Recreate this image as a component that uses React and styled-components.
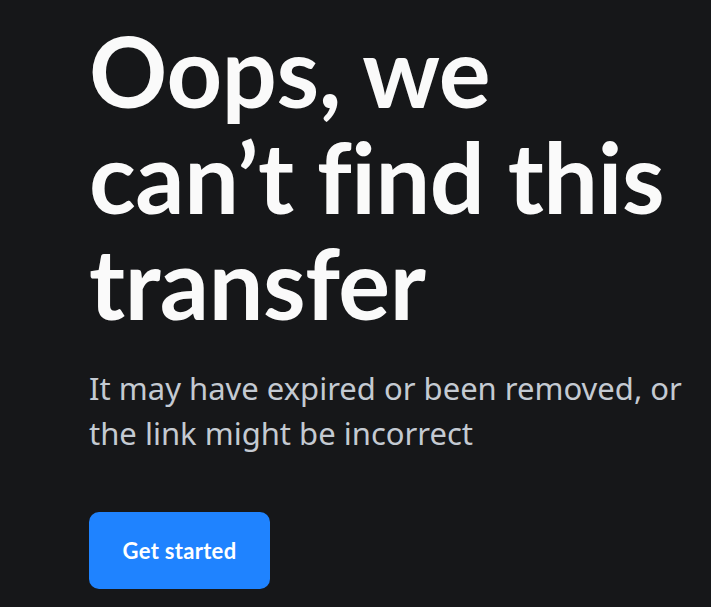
import React from 'react';
import styled, { createGlobalStyle } from 'styled-components';

const Global = createGlobalStyle`
  html, body {
    margin: 0;
    background: #161719;
  }
  body {
    font-family: Lato, "Noto Sans", sans-serif;
  }
`;

const NotFound = () => {
    return (
        <Page>
            <Global />
            <Content>
                <Title>
                    Oops, we<br />
                    can’t find this<br />
                    transfer
                </Title>
                <Lead>
                    It may have expired or been removed, or<br />
                    the link might be incorrect
                </Lead>
                <Button type="button">Get started</Button>
            </Content>
        </Page>
    );
};

export default NotFound;

const Page = styled.main`
  min-height: 607px;
  background: #161719;
  display: flex;
  padding: 0 0 0 89px;
  box-sizing: border-box;
`;

const Content = styled.div`
  display: flex;
  flex-direction: column;
  align-items: flex-start;
  padding-top: 18px;
`;

const Title = styled.h1`
  margin: 0;
  color: #fafafa;
  font-family: Lato, "Noto Sans", sans-serif;
  font-weight: 700;
  font-size: 97px;
  line-height: 106px;
  letter-spacing: -0.4px;
  font-variant-ligatures: none;
`;

const Lead = styled.p`
  margin: 30px 0 0;
  color: #c4cad2;
  font-family: "Noto Sans", sans-serif;
  font-size: 31px;
  line-height: 45px;
`;

const Button = styled.button`
  margin-top: 56px;
  width: 181px;
  height: 77px;
  border: 0;
  border-radius: 10px;
  background: #1f83ff;
  color: #ffffff;
  font-family: Lato, "Noto Sans", sans-serif;
  font-weight: 700;
  font-size: 22px;
  letter-spacing: 0.3px;
  cursor: pointer;
`;
